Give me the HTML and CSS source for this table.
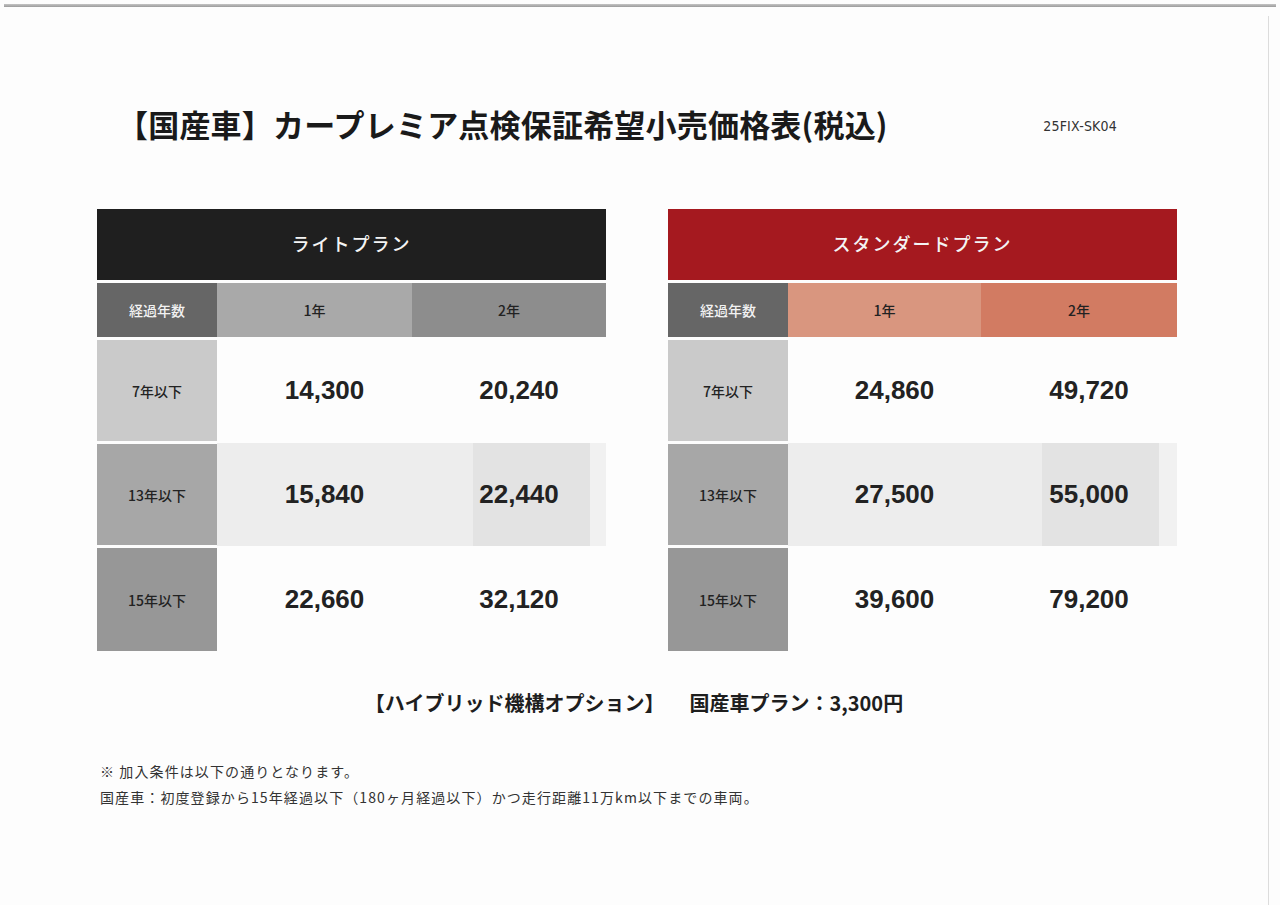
FILE: index.html
```html
<!DOCTYPE html>
<html lang="ja">
<head>
<meta charset="utf-8">
<title>カープレミア点検保証希望小売価格表</title>
<link rel="stylesheet" href="styles.css">
</head>
<body>
<div class="scan-edge"></div>
<div class="sheet">
  <div class="title-row">
    <h1 class="title">【国産車】カープレミア点検保証希望小売価格表(税込)</h1>
    <div class="doc-code">25FIX-SK04</div>
  </div>

  <div class="plans">
    <div class="plan plan-light">
      <div class="plan-head">ライトプラン</div>
      <div class="sub sub-label">経過年数</div>
      <div class="sub sub-y1">1年</div>
      <div class="sub sub-y2">2年</div>

      <div class="age age-1">7年以下</div>
      <div class="val">14,300</div>
      <div class="val">20,240</div>

      <div class="age age-2">13年以下</div>
      <div class="val val-shade">15,840</div>
      <div class="val val-shade val-shade-2">22,440</div>

      <div class="age age-3">15年以下</div>
      <div class="val">22,660</div>
      <div class="val">32,120</div>
    </div>

    <div class="plan plan-standard">
      <div class="plan-head">スタンダードプラン</div>
      <div class="sub sub-label">経過年数</div>
      <div class="sub sub-y1">1年</div>
      <div class="sub sub-y2">2年</div>

      <div class="age age-1">7年以下</div>
      <div class="val">24,860</div>
      <div class="val">49,720</div>

      <div class="age age-2">13年以下</div>
      <div class="val val-shade">27,500</div>
      <div class="val val-shade val-shade-2">55,000</div>

      <div class="age age-3">15年以下</div>
      <div class="val">39,600</div>
      <div class="val">79,200</div>
    </div>
  </div>

  <p class="option"><span>【ハイブリッド機構オプション】</span><span>国産車プラン：3,300円</span></p>

  <div class="notes">
    <p>※ 加入条件は以下の通りとなります。</p>
    <p>国産車：初度登録から15年経過以下（180ヶ月経過以下）かつ走行距離11万km以下までの車両。</p>
  </div>
</div>
</body>
</html>
```
FILE: styles.css
```css
html, body {
  margin: 0;
  padding: 0;
}
body {
  background: #fdfdfd;
  font-family: "Noto Sans CJK JP", "Noto Sans", sans-serif;
  color: #222;
  overflow: hidden;
}
.scan-edge {
  height: 3px;
  margin: 4px 4px 0 4px;
  background: linear-gradient(#c4c4c4, #9c9c9c);
}
.sheet {
  width: 1269px;
  height: 889px;
  margin-top: 9px;
  border-right: 1px solid #dcdcdc;
  box-sizing: border-box;
  padding-top: 88px;
}
.title-row {
  display: flex;
  align-items: center;
  padding-left: 117px;
  height: 40px;
}
.title {
  margin: 0;
  font-size: 31px;
  line-height: 40px;
  font-weight: 700;
  color: #1a1a1a;
  letter-spacing: 0.2px;
  white-space: nowrap;
}
.doc-code {
  margin-left: auto;
  margin-right: 151px;
  margin-top: 4px;
  font-family: "DejaVu Sans Condensed", "DejaVu Sans", sans-serif;
  font-stretch: condensed;
  font-size: 14px;
  letter-spacing: 0.2px;
  color: #333;
}
.plans {
  display: flex;
  gap: 62px;
  padding-left: 97px;
  margin-top: 65px;
}
.plan {
  display: grid;
  grid-template-columns: 120px 195px 194px;
  grid-template-rows: 71px 54px 101px 101px 103px;
  row-gap: 3px;
}
.plan-standard {
  grid-template-columns: 120px 193px 196px;
}
.plan-head {
  grid-column: 1 / 4;
  display: flex;
  align-items: center;
  justify-content: center;
  padding-bottom: 3px;
  color: #f4f4f4;
  font-size: 18px;
  font-weight: 500;
  letter-spacing: 2px;
}
.plan-light .plan-head {
  background: #1f1f1f;
}
.plan-standard .plan-head {
  background: #a5191f;
}
.sub {
  display: flex;
  align-items: center;
  justify-content: center;
  font-size: 14px;
  font-weight: 500;
  color: #222;
}
.sub-label {
  background: #666;
  color: #f2f2f2;
}
.plan-light .sub-y1 { background: #a9a9a9; }
.plan-light .sub-y2 { background: #8d8d8d; }
.plan-standard .sub-y1 { background: #d9967f; }
.plan-standard .sub-y2 { background: #d27b62; }
.age {
  display: flex;
  align-items: center;
  justify-content: center;
  font-size: 14px;
  font-weight: 500;
  color: #222;
}
.age-1 { background: #cacaca; }
.age-2 { background: #a7a7a7; }
.age-3 { background: #979797; }
.val {
  display: flex;
  align-items: center;
  justify-content: center;
  padding-left: 20px;
  font-family: "Liberation Sans", Arial, sans-serif;
  font-weight: 700;
  font-size: 26px;
  color: #222;
}
.val-shade {
  background: #ededed;
  margin-top: -1px;
  margin-bottom: -1px;
}
.val-shade-2 {
  background: linear-gradient(to right, #ededed 0, #ededed 61px, #e3e3e3 61px, #e3e3e3 178px, #f1f1f1 178px);
}
.option {
  margin: 38px 0 0 0;
  display: flex;
  justify-content: center;
  gap: 25px;
  font-size: 20px;
  line-height: 28px;
  font-weight: 700;
  color: #1e1e1e;
}
.notes {
  margin-top: 41px;
  padding-left: 100px;
  font-size: 14px;
  line-height: 26px;
  color: #333;
  letter-spacing: 1.1px;
}
.notes p {
  margin: 0;
}
```
